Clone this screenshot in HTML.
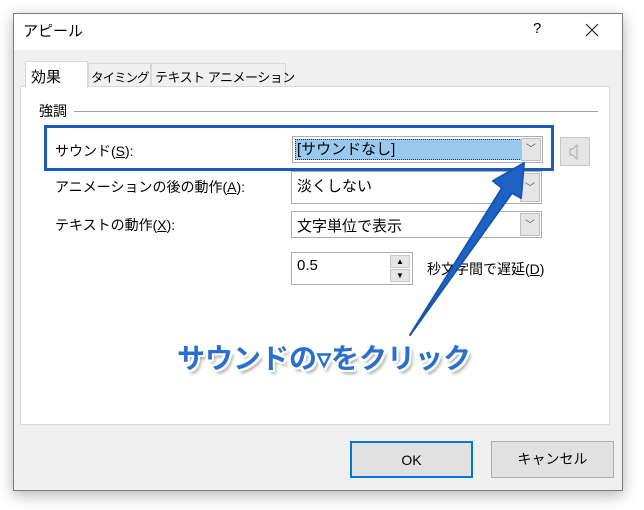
<!DOCTYPE html>
<html><head><meta charset="utf-8"><style>
*{box-sizing:border-box;margin:0;padding:0}
body{width:644px;height:510px;background:#fff;position:relative;overflow:hidden;font-family:"Liberation Sans","Noto Sans CJK JP",sans-serif;font-size:14px;color:#000}
.a{position:absolute;white-space:nowrap}
.dlg{left:13px;top:13px;width:610px;height:478px;background:#f0f0f0;border:1px solid #7a7a7a;box-shadow:0 4px 14px rgba(0,0,0,.3)}
.combo{background:#fff;border:1px solid #adadad}
.dd{position:absolute;right:1px;top:1px;bottom:1px;width:20px;background:#e5e5e5;border:1px solid #c0c0c0;font-size:10px;color:#555;text-align:center}
.btn{background:#e1e1e1;border:1px solid #adadad;text-align:center;line-height:34px;font-size:14px}
</style></head><body>
<div class="a dlg"></div>
<div class="a" style="left:14px;top:14px;width:608px;height:36px;background:#fff"></div>
<div class="a" style="left:23px;top:20px;font-size:15px">アピール</div>
<div class="a" style="left:533px;top:20px;font-size:15px">?</div>
<svg class="a" style="left:585px;top:23px" width="14" height="14"><path d="M1 1L13 13M13 1L1 13" stroke="#222" stroke-width="1.2"/></svg>
<div class="a" style="left:20px;top:86px;width:590px;height:339px;background:#fff;border:1px solid #d9d9d9"></div>
<div class="a" style="left:25px;top:61px;width:63px;height:27px;background:#fff;border:1px solid #d9d9d9;border-bottom:none;font-size:15px;padding:4px 0 0 5px">効果</div>
<div class="a" style="left:88px;top:63px;width:63px;height:23px;background:#f0f0f0;border:1px solid #d9d9d9;border-bottom:none;padding:3px 0 0 2px;font-size:12.5px;letter-spacing:-1px;overflow:hidden">タイミング</div>
<div class="a" style="left:151px;top:63px;width:135px;height:23px;background:#f0f0f0;border:1px solid #d9d9d9;border-bottom:none;padding:3px 0 0 3px;font-size:13px;letter-spacing:-0.5px">テキスト アニメーション</div>
<div class="a" style="left:39px;top:101px">強調</div>
<div class="a" style="left:74px;top:111px;width:524px;height:1px;background:#a0a0a0"></div>
<div class="a" style="left:55px;top:141px">サウンド(<u>S</u>):</div>
<div class="a combo" style="left:292px;top:136px;width:251px;height:27px;padding:2px"><div style="background:#99c9ef;height:21px;border:1px dotted #333;padding-left:1px;line-height:19px;font-size:15px">[サウンドなし]</div><div class="dd" style="line-height:22px">﹀</div></div>
<div class="a" style="left:560px;top:137px;width:30px;height:29px;background:#e5e5e5;border:1px solid #c8c8c8"><svg width="28" height="27"><path d="M9 11h3l4-4v14l-4-4H9z" fill="none" stroke="#aaa"/></svg></div>
<div class="a" style="left:44px;top:125px;width:510px;height:46px;border:3px solid #1b5cb4"></div>
<div class="a" style="left:55px;top:177px">アニメーションの後の動作(<u>A</u>):</div>
<div class="a combo" style="left:291px;top:171px;width:251px;height:33px;padding:3px 5px;font-size:15px">淡くしない<div class="dd" style="line-height:30px">﹀</div></div>
<div class="a" style="left:55px;top:215px">テキストの動作(<u>X</u>):</div>
<div class="a combo" style="left:291px;top:211px;width:251px;height:27px;padding:3px 5px;font-size:15px">文字単位で表示<div class="dd" style="line-height:24px">﹀</div></div>
<div class="a combo" style="left:291px;top:252px;width:122px;height:33px;padding:4px 5px;font-size:15px">0.5
<div class="a" style="right:2px;top:2px;width:20px;height:13px;background:#e5e5e5;border:1px solid #c8c8c8;font-size:8px;text-align:center;line-height:11px">▲</div>
<div class="a" style="right:2px;top:16px;width:20px;height:13px;background:#e5e5e5;border:1px solid #c8c8c8;font-size:8px;text-align:center;line-height:11px">▼</div></div>
<div class="a" style="left:427px;top:259px">秒文字間で遅延(<u>D</u>)</div>
<svg class="a" style="left:0;top:0" width="644" height="510"><path d="M410 335 L502 188 L493 181 L524 163 L521 198 L512 193 Z" fill="#1d62c4" stroke="#1756b0" stroke-width="2" stroke-linejoin="round"/></svg>
<div class="a" style="left:177px;top:337px;font-size:28px;font-weight:bold;color:#2a6fd0;text-shadow:2px 0 #fff,-2px 0 #fff,0 2px #fff,0 -2px #fff,2px 2px #fff,-2px -2px #fff,2px -2px #fff,-2px 2px #fff,3px 4px 3px rgba(0,0,0,.35)">サウンドの▿をクリック</div>
<div class="a btn" style="left:350px;top:441px;width:123px;height:37px;border:2px solid #0078d7">OK</div>
<div class="a btn" style="left:491px;top:441px;width:123px;height:37px">キャンセル</div>
</body></html>
